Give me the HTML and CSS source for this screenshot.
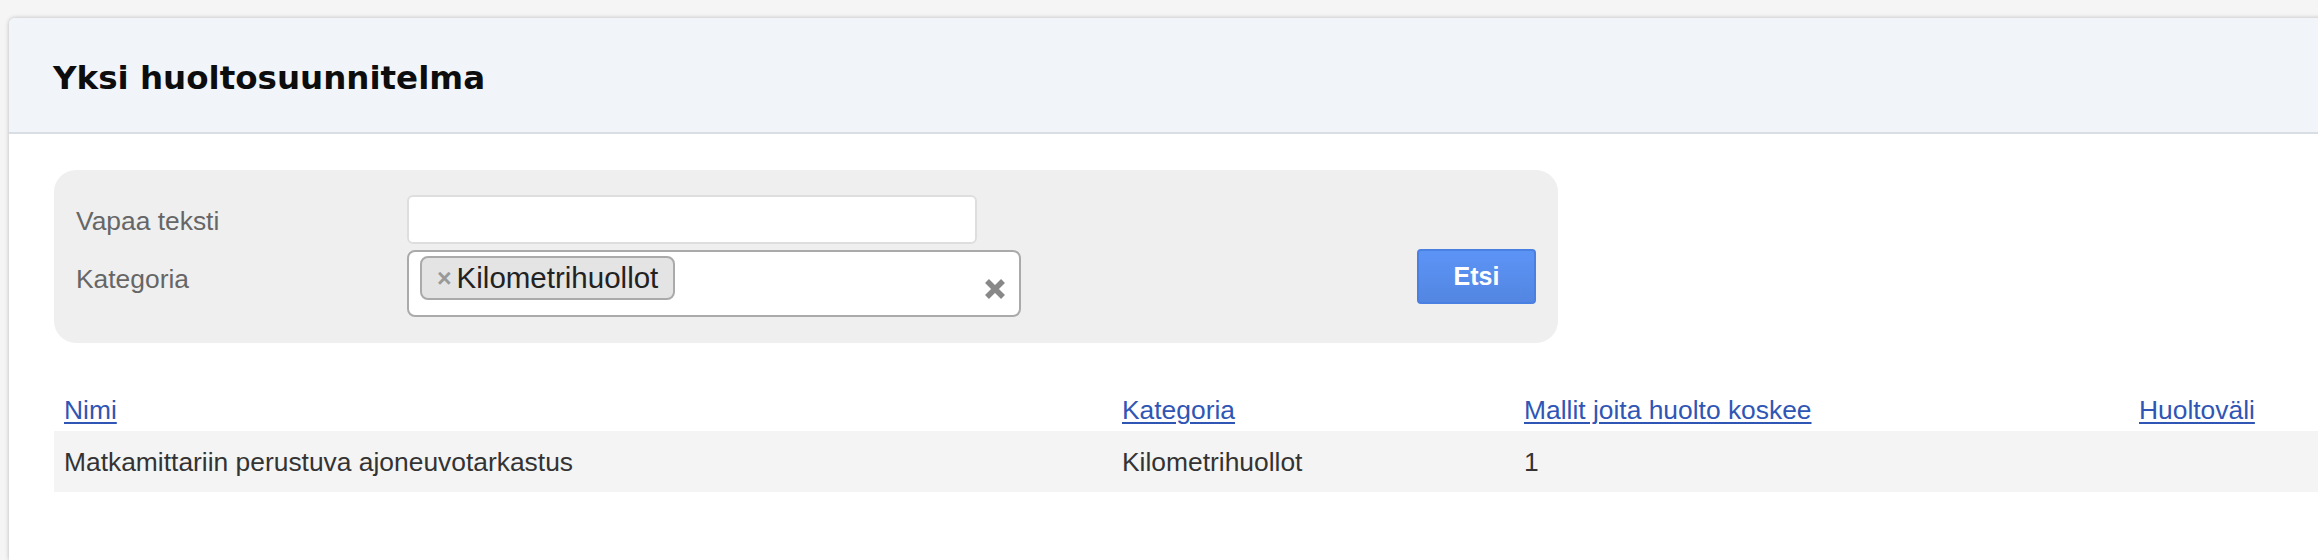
FILE: index.html
```html
<!DOCTYPE html>
<html lang="fi">
<head>
<meta charset="utf-8">
<title>Yksi huoltosuunnitelma</title>
<link rel="stylesheet" href="styles.css">
</head>
<body>
<div class="panel">
  <div class="panel-header">
    <h1 class="title">Yksi huoltosuunnitelma</h1>
  </div>
  <div class="panel-body">
    <form class="filter">
      <label class="label" for="q">Vapaa teksti</label>
      <input class="text-input" id="q" type="text">
      <span class="spacer"></span>
      <span class="label label-2">Kategoria</span>
      <div class="select">
        <span class="tag"><span class="tag-x">×</span><span class="tag-text">Kilometrihuollot</span></span>
        <svg class="clear" width="22" height="22" viewBox="0 0 22 22" aria-hidden="true">
          <path d="M3 3 L19 19 M19 3 L3 19" stroke="#888" stroke-width="5.5" stroke-linecap="butt"/>
        </svg>
      </div>
      <div class="btn-cell"><button class="btn" type="button">Etsi</button></div>
    </form>
    <table class="list">
      <colgroup>
        <col class="c1"><col class="c2"><col class="c3"><col class="c4">
      </colgroup>
      <thead>
        <tr>
          <th><a href="#">Nimi</a></th>
          <th><a href="#">Kategoria</a></th>
          <th><a href="#">Mallit joita huolto koskee</a></th>
          <th><a href="#">Huoltoväli</a></th>
        </tr>
      </thead>
      <tbody>
        <tr>
          <td>Matkamittariin perustuva ajoneuvotarkastus</td>
          <td>Kilometrihuollot</td>
          <td>1</td>
          <td></td>
        </tr>
      </tbody>
    </table>
  </div>
</div>
</body>
</html>
```
FILE: styles.css
```css
html, body {
  margin: 0;
  padding: 0;
  background: #f5f5f5;
  overflow: hidden;
  height: 560px;
}
body {
  font-family: "Liberation Sans", Arial, sans-serif;
  font-size: 26.4px;
  color: #333;
}
.panel {
  margin: 18px 0 0 9px;
  width: 2400px;
  height: 542px;
  background: #fff;
  border-top-left-radius: 6px;
  box-shadow: 0 0 4px rgba(0, 0, 0, 0.25);
  overflow: hidden;
}
.panel-header {
  background: #f1f4f9;
  border-bottom: 2px solid #d9dde4;
  padding: 40px 44px 34px;
}
.title {
  margin: 0;
  font-family: "DejaVu Sans", sans-serif;
  font-weight: bold;
  font-size: 32.5px;
  line-height: 40px;
  color: #0d0d0d;
}
.panel-body {
  padding: 36px 0 0 45px;
}
.filter {
  width: 1504px;
  box-sizing: border-box;
  background: #efefef;
  border-radius: 22px;
  padding: 25px 22px 26px 22px;
  display: grid;
  grid-template-columns: 331px 614px 1fr;
  row-gap: 6px;
  margin: 0;
}
.label {
  color: #666;
  line-height: 32px;
  padding-top: 10px;
  align-self: start;
}
.label-2 {
  padding-top: 13px;
}
.text-input {
  width: 570px;
  height: 49px;
  box-sizing: border-box;
  border: 2px solid #dedede;
  border-radius: 6px;
  background: #fff;
  margin: 0;
  padding: 0 10px;
  font: inherit;
}
.select {
  height: 67px;
  box-sizing: border-box;
  border: 2px solid #aaa;
  border-radius: 8px;
  background: #fff;
  display: flex;
  align-items: flex-start;
  justify-content: space-between;
  padding: 4px 13px 0 11px;
}
.tag {
  display: flex;
  align-items: center;
  height: 44px;
  box-sizing: border-box;
  background: #e4e4e4;
  border: 2px solid #aaa;
  border-radius: 8px;
  padding: 0 15px 0 15px;
  color: #222;
}
.tag-x {
  color: #999;
  font-weight: bold;
  font-size: 25px;
  margin-right: 5px;
}
.tag-text {
  font-size: 29.5px;
  line-height: 32px;
}
.clear {
  margin-top: 22px;
}
.btn-cell {
  display: flex;
  justify-content: flex-end;
  align-items: flex-start;
}
.btn {
  width: 119px;
  height: 55px;
  margin-top: -1px;
  border: 2px solid #4a80e2;
  border-radius: 4px;
  background: linear-gradient(#5c94f6, #5386e2);
  color: #fff;
  font-family: "Liberation Sans", Arial, sans-serif;
  font-weight: bold;
  font-size: 25px;
  padding: 0;
}
.list {
  margin-top: 39px;
  width: 2355px;
  border-collapse: collapse;
  table-layout: fixed;
}
.c1 { width: 1058px; }
.c2 { width: 402px; }
.c3 { width: 615px; }
.list th {
  text-align: left;
  font-weight: normal;
  line-height: 32px;
  padding: 12px 10px 5px;
}
.list th a {
  color: #2f56b5;
  text-decoration: underline;
  text-decoration-thickness: 2px;
  text-underline-offset: 3px;
}
.list td {
  background: #f4f4f4;
  line-height: 32px;
  padding: 15px 10px 14px;
  color: #333;
}
```
